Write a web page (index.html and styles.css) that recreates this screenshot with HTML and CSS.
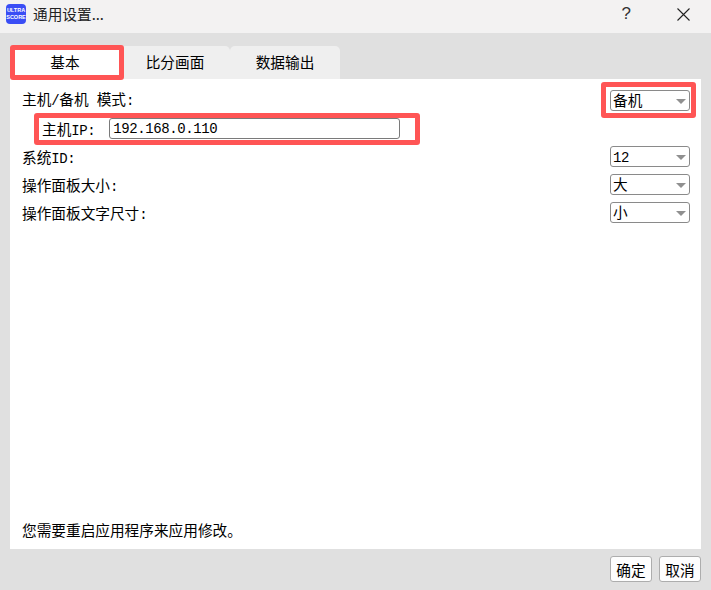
FILE: index.html
```html
<!DOCTYPE html>
<html lang="zh-CN">
<head>
    <meta charset="UTF-8">
    <meta name="viewport" content="width=device-width, initial-scale=1.0">
    <title>通用设置</title>
    <link rel="stylesheet" href="styles.css">
</head>
<body>

    <!-- Title bar -->
    <div class="titlebar">
        <div class="app-logo">ULTRA<br>SCORE</div>
        <div class="title">通用设置...</div>
        <div class="help">?</div>
        <svg class="close" width="13" height="13" viewBox="0 0 13 13">
            <path d="M0.5 0.5 L12.5 12.5 M12.5 0.5 L0.5 12.5" stroke="#222" stroke-width="1.1" fill="none"/>
        </svg>
    </div>

    <!-- Tabs -->
    <div class="tabs">
        <div class="tab active">基本</div>
        <div class="tab">比分画面</div>
        <div class="tab">数据输出</div>
    </div>

    <!-- Main panel -->
    <div class="panel">
        <div class="row row-mode">
            <span class="label">主机<span class="latin">/</span>备机<span class="latin"> </span>模式<span class="latin">:</span></span>
            <div class="select">备机<i class="arrow"></i></div>
        </div>
        <div class="row row-ip">
            <span>主机<span class="latin">IP:</span></span>
            <input class="ip-input" type="text" value="192.168.0.110">
        </div>
        <div class="row">
            <span>系统<span class="latin">ID:</span></span>
            <div class="select"><span class="latin">12</span><i class="arrow"></i></div>
        </div>
        <div class="row">
            <span>操作面板大小<span class="latin">:</span></span>
            <div class="select">大<i class="arrow"></i></div>
        </div>
        <div class="row">
            <span>操作面板文字尺寸<span class="latin">:</span></span>
            <div class="select">小<i class="arrow"></i></div>
        </div>
        <div class="notice">您需要重启应用程序来应用修改。</div>
    </div>

    <!-- Bottom buttons -->
    <div class="buttons">
        <button>确定</button>
        <button>取消</button>
    </div>

    <!-- Red highlight boxes drawn over the screenshot -->
    <div class="mark mark-tab"></div>
    <div class="mark mark-mode"></div>
    <div class="mark mark-ip"></div>

</body>
</html>
```

FILE: styles.css
```css
/* Reset body and window background */
body, html {
    margin: 0;
    padding: 0;
    width: 100%;
    height: 100%;
    overflow: hidden;
    background-color: #e0e0e0;
    color: #000;
    font-family: "Noto Sans CJK SC", sans-serif;
    font-size: 14.67px;
}

body {
    position: relative;
    display: flex;
    flex-direction: column;
}

/* Latin text in the dialog is narrower than the CJK text */
.latin {
    font-family: "Liberation Mono", monospace;
    font-size: 14px;
    letter-spacing: -0.4px;
    white-space: pre;
}

/* Title bar */
.titlebar {
    height: 33px;
    background-color: #f3f2f2;
    display: flex;
    align-items: center;
    padding-left: 6px;
    flex-shrink: 0;
}

.app-logo {
    width: 20px;
    height: 20px;
    border-radius: 4px;
    background-color: #3a4df5;
    color: #fff;
    font-family: "Liberation Sans", sans-serif;
    font-size: 5.5px;
    font-weight: bold;
    line-height: 7px;
    text-align: center;
    display: flex;
    align-items: center;
    justify-content: center;
    margin-bottom: 5px;
}

.title {
    margin-left: 7px;
    margin-bottom: 6px;
    color: #222;
    flex: 1;
}

.help {
    font-family: "Liberation Sans", sans-serif;
    font-size: 17px;
    color: #333;
    margin: 0 46px 5px 0;
}

.close {
    margin: 0 21px 5px 0;
}

/* Tabs */
.tabs {
    display: flex;
    margin: 13px 0 0 10px;
    height: 33px;
    flex-shrink: 0;
}

.tab {
    width: 110px;
    background-color: #efefef;
    border-radius: 5px 5px 0 0;
    text-align: center;
    line-height: 32px;
}

.tab.active {
    background-color: #fff;
}

/* Main panel */
.panel {
    height: 470px;
    margin: 0 10px;
    padding: 11px 11px 0 12px;
    box-sizing: border-box;
    background-color: #fff;
    position: relative;
    flex-shrink: 0;
}

.row {
    display: flex;
    align-items: center;
    justify-content: space-between;
    height: 21px;
    margin-bottom: 7px;
}

.row-mode .label {
    margin-bottom: 4px;
}

.row-ip {
    justify-content: flex-start;
    margin-left: 20px;
}

.ip-input {
    margin-left: 14px;
    width: 291px;
    height: 21px;
    padding: 0 3px;
    box-sizing: border-box;
    border: 1px solid #7a7a7a;
    border-radius: 3px;
    font-family: "Liberation Mono", monospace;
    font-size: 14px;
    letter-spacing: -0.4px;
    color: #000;
    outline: none;
}

.select {
    width: 80px;
    height: 21px;
    box-sizing: border-box;
    border: 1px solid #8a8a8a;
    border-radius: 3px;
    padding-left: 2px;
    line-height: 18px;
    position: relative;
}

.arrow {
    position: absolute;
    right: 3px;
    top: 8px;
    width: 0;
    height: 0;
    border-left: 5px solid transparent;
    border-right: 5px solid transparent;
    border-top: 5px solid #909090;
}

.notice {
    position: absolute;
    left: 12px;
    bottom: 9px;
}

/* Bottom buttons */
.buttons {
    display: flex;
    justify-content: flex-end;
    gap: 7px;
    margin: 7px 10px 0 0;
}

.buttons button {
    width: 42px;
    height: 26px;
    padding: 0;
    background-color: #fdfdfd;
    border: 1px solid #adadad;
    border-radius: 3px;
    font: inherit;
    color: #000;
}

/* Red highlight boxes */
.mark {
    position: absolute;
    box-sizing: border-box;
    border: 5px solid #ff5555;
    border-radius: 3px;
}

.mark-tab {
    left: 10px;
    top: 45px;
    width: 114px;
    height: 35px;
}

.mark-mode {
    left: 601px;
    top: 82px;
    width: 95px;
    height: 36px;
}

.mark-ip {
    left: 34px;
    top: 113px;
    width: 386px;
    height: 32px;
}
```
